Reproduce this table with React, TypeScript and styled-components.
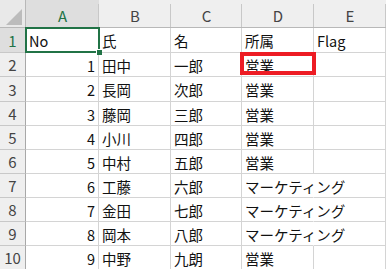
import React from "react";
import styled, { createGlobalStyle, css } from "styled-components";

const Global = createGlobalStyle`
  html, body { margin: 0; padding: 0; background: #ffffff; }
  body { font-family: "Noto Sans CJK JP", "Noto Sans", sans-serif; }
`;

const GREEN = "#217346";

const Sheet = styled.div`
  position: relative;
  display: grid;
  grid-template-columns: 26px 73px 72px 71px 72px 1fr;
  grid-template-rows: 28px 25px 24px 25px repeat(7, 24px);
  width: 386px;
  height: 269px;
  overflow: hidden;
  background: #ffffff;
  font-size: 14.5px;
  color: #111;
`;

const Corner = styled.div`
  position: relative;
  background: #e9e9e9;
  border-right: 1px solid #b8b8b8;
  border-bottom: 1px solid #b8b8b8;
  &::after {
    content: "";
    position: absolute;
    right: 3px;
    bottom: 2px;
    width: 0;
    height: 0;
    border-left: 16px solid transparent;
    border-bottom: 16px solid #bcbcbc;
  }
`;

const ColHead = styled.div<{ $active?: boolean }>`
  position: relative;
  display: flex;
  align-items: center;
  justify-content: center;
  padding-top: 3px;
  background: ${(p) => (p.$active ? "#dedede" : "#efefef")};
  color: ${(p) => (p.$active ? GREEN : "#444")};
  border-bottom: 1px solid ${(p) => (p.$active ? GREEN : "#b8b8b8")};
  font-size: 15px;
  &::after {
    content: "";
    position: absolute;
    right: 0;
    top: 4px;
    bottom: 0;
    width: 1px;
    background: #c8c8c8;
  }
`;

const RowHead = styled.div<{ $active?: boolean }>`
  display: flex;
  align-items: center;
  justify-content: center;
  background: ${(p) => (p.$active ? "#dedede" : "#efefef")};
  color: ${(p) => (p.$active ? GREEN : "#444")};
  border-right: 1px solid ${(p) => (p.$active ? GREEN : "#a8a8a8")};
  border-bottom: 1px solid #c8c8c8;
  font-size: 15px;
`;

const Cell = styled.div<{ $num?: boolean; $covered?: boolean }>`
  display: flex;
  align-items: center;
  padding: 1px 3px 0 3px;
  border-right: 1px solid #d4d4d4;
  border-bottom: 1px solid #d4d4d4;
  white-space: nowrap;
  overflow: visible;
  min-width: 0;
  ${(p) =>
    p.$num &&
    css`
      justify-content: flex-end;
    `}
  ${(p) =>
    p.$covered &&
    css`
      border-right-color: transparent;
    `}
`;

const Selection = styled.div`
  position: absolute;
  left: 25px;
  top: 27px;
  width: 71px;
  height: 22px;
  border: 2px solid ${GREEN};
  pointer-events: none;
  &::after {
    content: "";
    position: absolute;
    right: -4px;
    bottom: -4px;
    width: 5px;
    height: 5px;
    background: ${GREEN};
    border-left: 1px solid #fff;
    border-top: 1px solid #fff;
  }
`;

const Marker = styled.div`
  position: absolute;
  left: 240px;
  top: 52px;
  width: 68px;
  height: 15px;
  border: 4px solid #ed1c24;
  pointer-events: none;
`;

type Row = { no: number; sei: string; mei: string; dept: string };

const rows: Row[] = [
  { no: 1, sei: "田中", mei: "一郎", dept: "営業" },
  { no: 2, sei: "長岡", mei: "次郎", dept: "営業" },
  { no: 3, sei: "藤岡", mei: "三郎", dept: "営業" },
  { no: 4, sei: "小川", mei: "四郎", dept: "営業" },
  { no: 5, sei: "中村", mei: "五郎", dept: "営業" },
  { no: 6, sei: "工藤", mei: "六郎", dept: "マーケティング" },
  { no: 7, sei: "金田", mei: "七郎", dept: "マーケティング" },
  { no: 8, sei: "岡本", mei: "八郎", dept: "マーケティング" },
  { no: 9, sei: "中野", mei: "九朗", dept: "営業" },
];

const columns = ["A", "B", "C", "D", "E"];

export default function App() {
  return (
    <>
      <Global />
      <Sheet>
        <Corner />
        {columns.map((c) => (
          <ColHead key={c} $active={c === "A"}>
            {c}
          </ColHead>
        ))}

        <RowHead $active>1</RowHead>
        <Cell>No</Cell>
        <Cell>氏</Cell>
        <Cell>名</Cell>
        <Cell>所属</Cell>
        <Cell>Flag</Cell>

        {rows.map((r, i) => {
          const long = r.dept.length > 4;
          return (
            <React.Fragment key={r.no}>
              <RowHead>{i + 2}</RowHead>
              <Cell $num>{r.no}</Cell>
              <Cell>{r.sei}</Cell>
              <Cell>{r.mei}</Cell>
              <Cell $covered={long}>{r.dept}</Cell>
              <Cell />
            </React.Fragment>
          );
        })}
        <Selection />
        <Marker />
      </Sheet>
    </>
  );
}
